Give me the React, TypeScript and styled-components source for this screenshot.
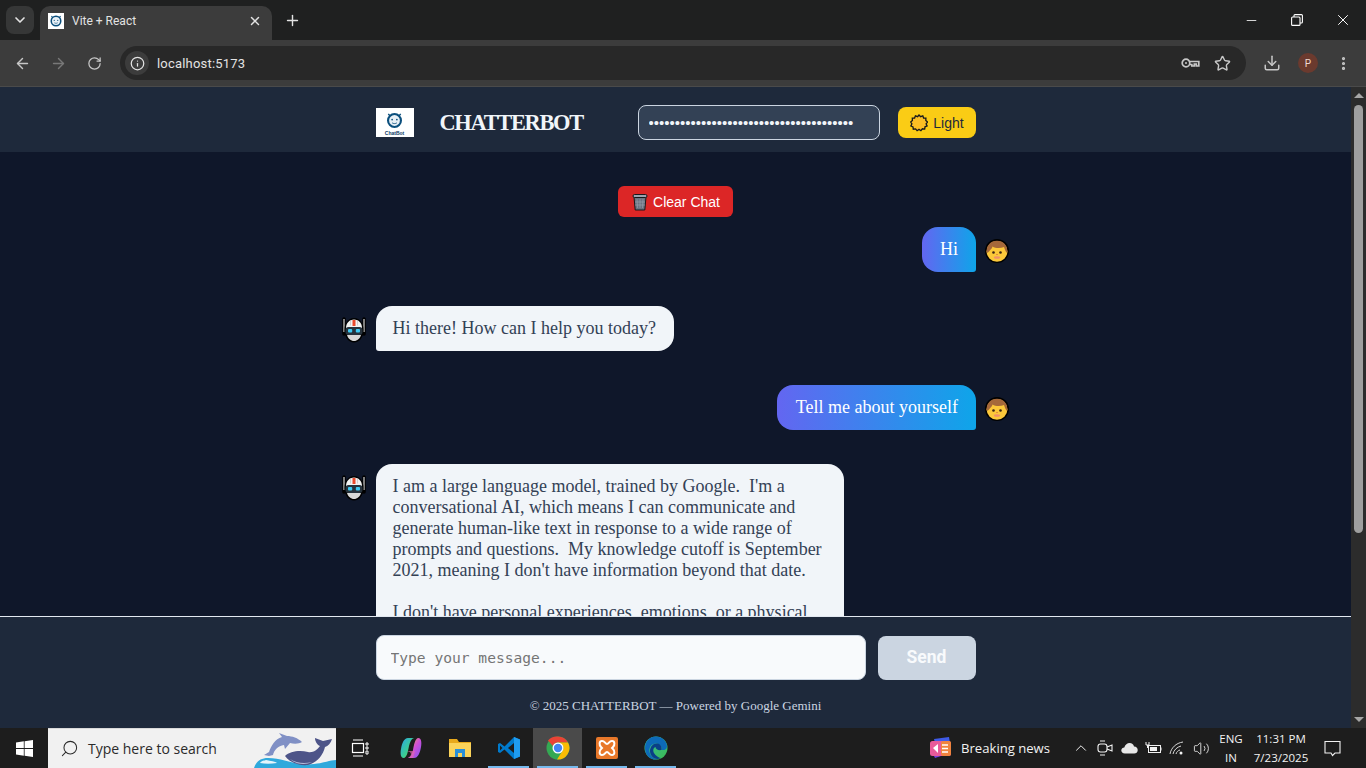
import styled, { createGlobalStyle } from 'styled-components';
import {
    ArrowLeft,
    ArrowRight,
    ChevronDown,
    ChevronUp,
    Download,
    EllipsisVertical,
    Info,
    Minus,
    Plus,
    RotateCw,
    Search,
    Star,
    Volume2,
    X,
} from 'lucide-react';

const GlobalStyle = createGlobalStyle`
    html, body {
        margin: 0;
        padding: 0;
        height: 100%;
        overflow: hidden;
        background: #0f172a;
    }
    * {
        box-sizing: border-box;
    }
`;

const Screen = styled.div`
    width: 1366px;
    height: 768px;
    display: flex;
    flex-direction: column;
    overflow: hidden;
    font-family: 'Liberation Serif', serif;
`;

/* browser frame */
const TabStrip = styled.div`
    height: 40px;
    flex: none;
    display: flex;
    align-items: flex-end;
    padding-left: 6px;
    background: #1f2020;
    color: #e3e3e3;
`;

const TabSearch = styled.div`
    width: 28px;
    height: 28px;
    margin-bottom: 6px;
    border-radius: 8px;
    background: #363737;
    display: flex;
    align-items: center;
    justify-content: center;
`;

const Tab = styled.div`
    width: 232px;
    height: 34px;
    margin-left: 6px;
    padding: 0 10px 5px 8px;
    border-radius: 10px 10px 0 0;
    background: #3c3c3c;
    display: flex;
    align-items: center;
    font: 12px 'Roboto', sans-serif;
`;

const Favicon = styled.div`
    width: 16px;
    height: 16px;
    background: #fff;
    display: flex;
    align-items: center;
    justify-content: center;
`;

const TabTitle = styled.span`
    margin-left: 8px;
    flex: 1;
`;

const NewTab = styled.div`
    width: 28px;
    height: 28px;
    margin: 0 0 6px 6px;
    display: flex;
    align-items: center;
    justify-content: center;
`;

const WindowControls = styled.div`
    margin-left: auto;
    height: 40px;
    display: flex;
`;

const WindowButton = styled.div`
    width: 46px;
    height: 40px;
    display: flex;
    align-items: center;
    justify-content: center;
    color: #fff;
`;

const Toolbar = styled.div`
    height: 47px;
    flex: none;
    display: flex;
    align-items: center;
    padding: 0 4px 0 4px;
    background: #3c3c3c;
    border-bottom: 1px solid #4a4a4a;
    color: #c7c7c7;
`;

const NavButton = styled.div<{ $dim?: boolean }>`
    width: 36px;
    height: 36px;
    display: flex;
    align-items: center;
    justify-content: center;
    color: ${(p) => (p.$dim ? '#787878' : '#c7c7c7')};
`;

const AddressBar = styled.div`
    width: 1126px;
    height: 34px;
    margin-left: 8px;
    padding: 0 15px 0 5px;
    border-radius: 17px;
    background: #282828;
    display: flex;
    align-items: center;
    gap: 8px;
`;

const SiteInfo = styled.div`
    width: 24px;
    height: 24px;
    border-radius: 50%;
    background: #3c3c3c;
    color: #e3e3e3;
    display: flex;
    align-items: center;
    justify-content: center;
`;

const Url = styled.span`
    flex: 1;
    color: #e3e3e3;
    font: 13px 'Roboto', sans-serif;
    letter-spacing: 0.2px;
`;

const AddressIcons = styled.div`
    display: flex;
    align-items: center;
    gap: 14px;
`;

const ToolbarEnd = styled.div`
    margin-left: 8px;
    display: flex;
    align-items: center;
`;

const Profile = styled.div`
    width: 20px;
    height: 20px;
    margin: 0 7px 0 8px;
    border-radius: 50%;
    background: #6b3a2e;
    color: #f0d8d0;
    display: flex;
    align-items: center;
    justify-content: center;
    font: 10px 'Roboto', sans-serif;
`;

/* page in the viewport */
const Viewport = styled.div`
    height: 641px;
    flex: none;
    display: flex;
`;

const Page = styled.div`
    flex: 1;
    min-width: 0;
    display: flex;
    flex-direction: column;
    background: #0f172a;
`;

const Header = styled.header`
    height: 65px;
    flex: none;
    padding-top: 6px;
    background: #1e293b;
    display: flex;
    justify-content: center;
`;

const HeaderInner = styled.div`
    width: 600px;
    display: flex;
    align-items: center;
`;

const Logo = styled.div`
    width: 38px;
    height: 29px;
    padding-top: 3px;
    background: #fff;
    display: flex;
    flex-direction: column;
    align-items: center;
    color: #0b3a66;
    font: bold 5px/6px 'Liberation Sans', sans-serif;
`;

const Title = styled.h1`
    width: 198px;
    margin: 0 0 0 26px;
    color: #f1f5f9;
    font: bold 22.4px 'Liberation Serif', serif;
    letter-spacing: -1.3px;
`;

const KeyInput = styled.input`
    width: 242px;
    height: 35px;
    padding: 0 10px;
    border: 1px solid #cbd5e1;
    border-radius: 8px;
    outline: none;
    background: #334155;
    color: #f1f5f9;
    font: 15px 'Liberation Sans', sans-serif;
`;

const ThemeButton = styled.button`
    width: 78px;
    height: 31px;
    margin-left: 18px;
    padding: 0 0 0 1px;
    border: none;
    border-radius: 8px;
    background: #facc15;
    color: #1e293b;
    display: flex;
    align-items: center;
    justify-content: center;
    gap: 5px;
    font: 14px 'Liberation Sans', sans-serif;
`;

const Conversation = styled.main`
    flex: 1;
    min-height: 0;
    overflow: hidden;
    display: flex;
    justify-content: center;
`;

const ChatColumn = styled.div`
    width: 600px;
    padding-top: 34px;
    display: flex;
    flex-direction: column;
`;

const ClearButton = styled.button`
    width: 115px;
    height: 31px;
    flex: none;
    margin: 0 auto 10px;
    padding: 0 0 0 1px;
    border: none;
    border-radius: 6px;
    background: #dc2626;
    color: #fff;
    display: flex;
    align-items: center;
    justify-content: center;
    gap: 5px;
    font: 14px 'Liberation Sans', sans-serif;
`;

const Row = styled.div<{ $mine?: boolean }>`
    position: relative;
    flex: none;
    display: flex;
    justify-content: ${(p) => (p.$mine ? 'flex-end' : 'flex-start')};
    margin-bottom: 34px;
`;

const Bubble = styled.div<{ $mine?: boolean }>`
    max-width: 468px;
    padding: ${(p) => (p.$mine ? '12px 17.5px 12px 18.5px' : '12px 18px 12px 17px')};
    border-radius: ${(p) => (p.$mine ? '16px 16px 3px 16px' : '16px 16px 16px 3px')};
    background: ${(p) => (p.$mine ? 'linear-gradient(90deg, #6366f1, #0ea5e9)' : '#f1f5f9')};
    color: ${(p) => (p.$mine ? '#fff' : '#334155')};
    font-size: 18px;
    line-height: 21px;
    white-space: pre-wrap;
`;

const Avatar = styled.div<{ $mine?: boolean }>`
    position: absolute;
    top: ${(p) => (p.$mine ? '12px' : '10px')};
    ${(p) => (p.$mine ? 'right: -33px;' : 'left: -34px;')}
    width: 24px;
`;

const Composer = styled.footer`
    height: 112px;
    flex: none;
    border-top: 1px solid #e2e8f0;
    background: #1e293b;
    padding-top: 18px;
    display: flex;
    flex-direction: column;
    align-items: center;
`;

const ComposerRow = styled.div`
    width: 600px;
    display: flex;
    align-items: flex-end;
    gap: 12px;
`;

const MessageInput = styled.input`
    flex: 1;
    height: 45px;
    padding: 0 14px;
    border: 1px solid #cbd5e1;
    border-radius: 8px;
    outline: none;
    background: #f8fafc;
    font: 14.6px 'DejaVu Sans Mono', monospace;
    &::placeholder {
        color: #757575;
    }
`;

const SendButton = styled.button`
    width: 98px;
    height: 44px;
    padding: 0 0 2px;
    border: none;
    border-radius: 8px;
    background: #cbd5e1;
    color: #f8fafc;
    font: bold 17.5px 'Roboto', sans-serif;
`;

const Credit = styled.div`
    margin-top: 18px;
    color: #cbd5e1;
    font-size: 13px;
    line-height: 16px;
`;

const Scrollbar = styled.div`
    width: 15px;
    flex: none;
    background: #2c2c2c;
    display: flex;
    flex-direction: column;
    align-items: center;
`;

const ScrollArrow = styled.div<{ $down?: boolean }>`
    width: 0;
    height: 0;
    margin: ${(p) => (p.$down ? 'auto 0 6px' : '6px 0 7px')};
    border-left: 5px solid transparent;
    border-right: 5px solid transparent;
    ${(p) => (p.$down ? 'border-top: 5px solid #a6a6a6;' : 'border-bottom: 5px solid #a6a6a6;')}
`;

const ScrollThumb = styled.div`
    width: 9px;
    height: 428px;
    border-radius: 5px;
    background: #9f9f9f;
`;

/* windows taskbar */
const Taskbar = styled.div`
    height: 40px;
    flex: none;
    display: flex;
    align-items: stretch;
    background: #1d1d1d;
    color: #f2f2f2;
`;

const StartButton = styled.div`
    width: 48px;
    display: flex;
    align-items: center;
    justify-content: center;
`;

const SearchBox = styled.div`
    position: relative;
    width: 288px;
    padding-left: 12px;
    border-top: 1px solid #d9d9d9;
    background: #f1f1f1;
    color: #2b2b2b;
    display: flex;
    align-items: center;
    gap: 9px;
    overflow: hidden;
    font: 14px 'Open Sans', sans-serif;
`;

const SearchArt = styled.svg`
    position: absolute;
    right: 0;
    bottom: 0;
`;

const TaskItem = styled.div<{ $active?: boolean; $open?: boolean }>`
    position: relative;
    width: 49px;
    display: flex;
    align-items: center;
    justify-content: center;
    background: ${(p) => (p.$active ? '#4a4a4a' : 'transparent')};
    &::after {
        content: '';
        display: ${(p) => (p.$open ? 'block' : 'none')};
        position: absolute;
        left: 4px;
        right: 4px;
        bottom: 0;
        height: 2px;
        background: #76b9ed;
    }
`;

const TaskViewItem = styled(TaskItem)`
    width: 50px;
    padding-right: 3px;
`;

const NewsItem = styled.div`
    margin-left: auto;
    display: flex;
    align-items: center;
    gap: 8px;
    font: 13.1px 'Open Sans', sans-serif;
`;

const Tray = styled.div`
    margin-left: 19px;
    display: flex;
    align-items: center;
`;

const TrayIcon = styled.div`
    width: 24px;
    display: flex;
    align-items: center;
    justify-content: center;
`;

const TrayText = styled.div<{ $wide?: boolean }>`
    width: ${(p) => (p.$wide ? '64px' : '36px')};
    text-align: center;
    font: 11.5px/19px 'Open Sans', sans-serif;
`;

const Notify = styled.div`
    width: 53px;
    padding-right: 15px;
    display: flex;
    align-items: center;
    justify-content: center;
`;

/* drawn pictures */
const BotFace = ({ size }: { size: number }) => (
    <svg width={size} height={size} viewBox="0 0 20 20">
        <circle cx="10" cy="10" r="6.800" fill="#e8f0f6" stroke="#0b4f7d" strokeWidth="2.200" />
        <path d="M3.500 3l2 2.500M16.500 3l-2 2.500" stroke="#0b4f7d" strokeWidth="1.500" />
        <circle cx="7.500" cy="9" r="0.900" fill="#0b4f7d" />
        <circle cx="12.500" cy="9" r="0.900" fill="#0b4f7d" />
        <path d="M7.500 12.500c1.500 1 3.500 1 5 0" fill="none" stroke="#0b4f7d" strokeWidth="0.900" />
    </svg>
);

const KeyIcon = () => (
    <svg width="19" height="12" viewBox="0 0 19 12" fill="none" stroke="#c7c7c7" strokeWidth="1.700">
        <circle cx="5" cy="6" r="3.800" />
        <circle cx="5" cy="6" r="1" fill="#c7c7c7" stroke="none" />
        <path d="M8.800 4.500h9v4.500h-2.500V7h-2v2h-2.500V7.500H8.800" />
    </svg>
);

const RestoreIcon = () => (
    <svg width="12" height="12" viewBox="0 0 12 12" fill="none" stroke="#fff" strokeWidth="1.100">
        <rect x="0.600" y="3" width="8.400" height="8.400" rx="1" />
        <path d="M3 3V1.600a1 1 0 0 1 1-1h6.400a1 1 0 0 1 1 1V8a1 1 0 0 1-1 1H9" />
    </svg>
);

const SunIcon = () => (
    <svg width="18" height="18" viewBox="0 0 18 18">
        <path
            d="M9 1l1.600 1.700 2.200-.9.800 2.200 2.300.1-.1 2.300 1.700 1.600-1.400 1.800 1 2.100-2.100.9-.3 2.300-2.300-.3L10.900 16.700 9 15.400l-1.900 1.300-1.500-1.800-2.300.3-.3-2.300-2.100-.9 1-2.100L.7 8l1.700-1.600-.1-2.300 2.300-.1.800-2.200 2.200.9z"
            fill="#fbbf24"
            stroke="#17191c"
            strokeWidth="1.300"
        />
    </svg>
);

const TrashIcon = () => (
    <svg width="16" height="18" viewBox="0 0 16 18">
        <path d="M2 4h12l-1.200 13H3.200z" fill="#6b7280" stroke="#17191c" strokeWidth="1" />
        <path d="M5 6l.5 9M8 6v9M11 6l-.5 9M3 9h10M3 12h10" stroke="#9ca3af" strokeWidth="0.600" />
        <rect x="1" y="1.500" width="14" height="3" rx="1.500" fill="#9ca3af" stroke="#17191c" strokeWidth="1" />
    </svg>
);

const BoyEmoji = () => (
    <svg width="24" height="24" viewBox="0 0 24 24" display="block">
        <circle cx="12" cy="12" r="12" fill="#000" />
        <circle cx="12" cy="12.300" r="10.400" fill="#fcc83a" />
        <path d="M1.700 14C.8 6 6 1.700 12 1.700S23.200 6 22.300 14c-1-.5-1.800-1.800-2.300-3.200-.3-.9-.6-1.900-1-2.800-3.500 1.500-8.500 1.400-11.500-.5-.4 1.800-1.600 2.700-2.500 3.800-.8 1-1.300 2.300-3.300 2.700z" fill="#a5683a" />
        <circle cx="8.500" cy="13.500" r="1.300" fill="#3b2314" />
        <circle cx="15.500" cy="13.500" r="1.300" fill="#3b2314" />
        <path d="M11 15.500h2" stroke="#e58a3c" strokeWidth="1" />
        <ellipse cx="12" cy="18.500" rx="3.200" ry="1.300" fill="#f0906a" />
    </svg>
);

const RobotEmoji = () => (
    <svg width="24" height="28" viewBox="0 0 24 28" display="block">
        <path d="M2 3v15M22 3v15" stroke="#000" strokeWidth="3.600" strokeLinecap="round" />
        <path d="M2 3v13M22 3v13" stroke="#a8a8a8" strokeWidth="1.500" />
        <path d="M12 2C6 2 2.500 7 2.500 14c0 7 4 12.500 9.500 12.500S21.500 21 21.500 14C21.500 7 18 2 12 2z" fill="#000" />
        <path d="M4 12C4 7 7.500 3.500 12 3.500S20 7 20 12z" fill="#f2f2f2" />
        <path d="M5 19h14c-1 3.500-3.800 6-7 6s-6-2.500-7-6z" fill="#d8d8d8" />
        <rect x="10.500" y="4" width="3" height="6" fill="#ea4a2c" />
        <path d="M8.500 4.500v5M15.500 4.500v5" stroke="#c4c4c4" strokeWidth="0.800" />
        <rect x="3.500" y="11" width="17" height="8" rx="3" fill="#26323c" />
        <rect x="6" y="13" width="4.200" height="3.500" rx="1" fill="#3cc8f2" />
        <rect x="13.800" y="13" width="4.200" height="3.500" rx="1" fill="#3cc8f2" />
    </svg>
);

const WindowsLogo = () => (
    <svg width="17" height="17" viewBox="0 0 17 17" fill="#fff">
        <path d="M0 2.400 7.800 1.300v6.800H0zM8.600 1.200 17 0v8.100H8.600zM0 8.900h7.800v6.800L0 14.600zM8.600 8.900H17V17l-8.400-1.200z" />
    </svg>
);

const TaskView = () => (
    <svg width="18" height="18" viewBox="0 0 18 18" fill="none" stroke="#fff" strokeWidth="1.200">
        <path d="M2 1h10M2 17h10" />
        <rect x="1.500" y="4.500" width="11" height="9" />
        <path d="M15 4h2v2h-2zM15 8h2v2h-2zM15 12h2v3h-2z" strokeWidth="1" />
    </svg>
);

const CopilotIcon = () => (
    <svg width="22" height="22" viewBox="0 0 22 22">
        <defs>
            <linearGradient id="cpa" x1="0" y1="0" x2="1" y2="1">
                <stop offset="0" stopColor="#2aa6e8" />
                <stop offset="0.600" stopColor="#3ccf8e" />
                <stop offset="1" stopColor="#f6c23a" />
            </linearGradient>
            <linearGradient id="cpb" x1="0" y1="0" x2="1" y2="1">
                <stop offset="0" stopColor="#f2b33c" />
                <stop offset="0.500" stopColor="#d04fd8" />
                <stop offset="1" stopColor="#7a5af0" />
            </linearGradient>
        </defs>
        <path d="M8 1h6c-3 1-4 4-5 8-1 5-2 12-5.500 12C1 21 0 17 1 12 2 6 4 1 8 1z" fill="url(#cpa)" />
        <path d="M14 21H8c3-1 4-4 5-8 1-5 2-12 5.500-12C21 1 22 5 21 10c-1 6-3 11-7 11z" fill="url(#cpb)" />
        <path d="M7 14h8l-2 7H8c2-1 3-3 3-4l-1-2z" fill="#e06ab0" opacity="0.700" />
    </svg>
);

const FolderIcon = () => (
    <svg width="22" height="20" viewBox="0 0 22 20">
        <path d="M0 1h8l2 3h12v15H0z" fill="#e8a91c" />
        <path d="M0 5h22v14H0z" fill="#fbd35a" />
        <path d="M6 11h10v8h-3v-4H9v4H6z" fill="#2a8fd8" />
    </svg>
);

const VsCodeIcon = () => (
    <svg width="24" height="24" viewBox="0 0 24 24">
        <path d="M17 1 7.500 10.500 3 7 1 8v8l2 1 4.500-3.500L17 23l6-2.500v-17z" fill="#007acc" />
        <path d="M17 1l6 2.500v17L17 23z" fill="#1f9cf0" />
        <path d="M17 7v10l-6-5z" fill="#1d1d1d" />
        <path d="M3 9.500v5L5.500 12z" fill="#1d1d1d" />
    </svg>
);

const ChromeIcon = () => (
    <svg width="24" height="24" viewBox="0 0 24 24">
        <circle cx="12" cy="12" r="11.500" fill="#34a853" />
        <path d="M12 .5A11.500 11.500 0 0 1 22 6.500H12A5.500 5.500 0 0 0 6.800 10L2 4.500A11.500 11.500 0 0 1 12 .5z" fill="#ea4335" />
        <path d="M22 6.500A11.500 11.500 0 0 1 11 23.500L17 14a5.500 5.500 0 0 0-5-7.500z" fill="#fbbc04" />
        <circle cx="12" cy="12" r="5.500" fill="#fff" />
        <circle cx="12" cy="12" r="4.200" fill="#4285f4" />
    </svg>
);

const XamppIcon = () => (
    <svg width="24" height="24" viewBox="0 0 24 24">
        <rect x="1" y="1" width="22" height="22" rx="2" fill="#e8782a" />
        <path d="M7 5c3 0 3 3 5 3s2-3 5-3 3 4 1 6l-1 1 1 1c2 2 2 6-1 6s-3-3-5-3-2 3-5 3-3-4-1-6l1-1-1-1C4 9 4 5 7 5z" fill="none" stroke="#fff" strokeWidth="2" />
    </svg>
);

const EdgeIcon = () => (
    <svg width="24" height="24" viewBox="0 0 24 24">
        <defs>
            <linearGradient id="edg" x1="0" y1="0" x2="1" y2="1">
                <stop offset="0" stopColor="#35c1a0" />
                <stop offset="1" stopColor="#3db94f" />
            </linearGradient>
        </defs>
        <circle cx="12" cy="12" r="11.500" fill="url(#edg)" />
        <path d="M1 12C1 5 6 .5 12 .5c5 0 11 4 11 10 0 3-3 4-5.500 3.500 1-3-2-6.500-5.500-6.500-5 0-8 5-6 10 1 3 4 5.500 8 6C6 24.500 1 19 1 12z" fill="#0d6ab8" />
        <path d="M6 15c0-4 3-7.500 6.500-7.500S18 10 17.500 14c-3 .5-6-.5-6-3-3 1-3 5 0 8 1.500 1.500 3.500 3 5.500 3-6 3-11-2-11-7z" fill="#0a3f88" />
    </svg>
);

const NewsIcon = () => (
    <svg width="24" height="24" viewBox="0 0 24 24">
        <path d="M5 3l15-2 1 6H6z" fill="#3f5be8" />
        <path d="M4 18h14l-12 4z" fill="#7a3fe0" />
        <rect x="1" y="5" width="21" height="15" rx="2.500" fill="#e85a9a" />
        <rect x="12" y="5" width="10" height="15" rx="2" fill="#f0843e" />
        <path d="M4 12l5-4v9z" fill="#fff" />
        <path d="M13 9h6M13 12.500h6M13 16h6" stroke="#fff" strokeWidth="1.500" />
    </svg>
);

const MeetIcon = () => (
    <svg width="16" height="18" viewBox="0 0 16 18" fill="none" stroke="#f2f2f2" strokeWidth="1.100">
        <rect x="1" y="5" width="9" height="8" rx="2.500" />
        <path d="M10 8l5-2v6l-5-2M3 2h5M3 16h5" />
    </svg>
);

const CloudIcon = () => (
    <svg width="17" height="12" viewBox="0 0 17 12" fill="#e8e8e8">
        <path d="M4 11.500C1.500 11.500.3 10 .3 8.500c0-2 1.500-3 3-3C4.200 2.500 6.300 1 8.500 1c2.500 0 4 1.500 4.500 3.500 2.500 0 4 1.700 3.700 4-.2 1.800-1.500 3-3.500 3z" />
    </svg>
);

const BatteryIcon = () => (
    <svg width="17" height="14" viewBox="0 0 17 14" fill="none" stroke="#f2f2f2" strokeWidth="1">
        <rect x="3.500" y="4.500" width="12" height="7" />
        <rect x="5" y="6" width="7" height="4" fill="#f2f2f2" stroke="none" />
        <path d="M1 1v3h3V1M2.500 4v3" />
        <path d="M16 6.500v3" />
    </svg>
);

const WifiIcon = () => (
    <svg width="16" height="14" viewBox="0 0 16 14" fill="none" stroke="#d8d8d8" strokeWidth="1">
        <path d="M1 13C2 7 7 2 14 1M4 13c.8-4 4-7 8-8M7 13c.5-2 2-3.500 4-4" />
        <circle cx="12" cy="12" r="1.500" fill="#f2f2f2" stroke="none" />
    </svg>
);

const NotifyIcon = () => (
    <svg width="17" height="17" viewBox="0 0 17 17" fill="none" stroke="#f2f2f2" strokeWidth="1.100">
        <path d="M1 1.500h15v11.500h-5l-2.500 2.500L7 13H1z" />
    </svg>
);

const DolphinArt = () => (
    <SearchArt width="82" height="40" viewBox="0 0 82 40">
        <path d="M0 40C2 34 6 30 14 30c16 0 26 8 46 6 10-1 16-4 22-4v8z" fill="#2fa9dc" />
        <path d="M6 35c2-3 4-2 6-3 2 0 3 1 5 1 2 0 5 1 6 2-6 1-12 1-17 0z" fill="#e4f5fb" />
        <path d="M48 14C44 10 38 8 33 8L25 5l3 4C21 11 17 18 15 24l-5 3 5 1 4-1c1-5 5-9 11-10l1 4 5-6c4 1 9 1 12-1z" fill="#8090c5" />
        <path d="M31 28c5-5 15-6 23-4 5 1 9-2 12-6-3-1-5-5-5-8l8 3 9-2c-1 4-4 7-7 8-2 9-9 16-17 18-10 1-19-3-23-9z" fill="#4d5488" />
        <path d="M36 31c6 4 14 5 22 3-6 3-16 3-22-3z" fill="#b9bfdc" />
    </SearchArt>
);

const App = () => (
    <Screen>
        <GlobalStyle />
        <TabStrip>
            <TabSearch>
                <ChevronDown size={16} strokeWidth={2.500} />
            </TabSearch>
            <Tab>
                <Favicon>
                    <BotFace size={14} />
                </Favicon>
                <TabTitle>Vite + React</TabTitle>
                <X size={14} strokeWidth={2.500} />
            </Tab>
            <NewTab>
                <Plus size={17} strokeWidth={2} />
            </NewTab>
            <WindowControls>
                <WindowButton>
                    <Minus size={15} strokeWidth={1.300} />
                </WindowButton>
                <WindowButton>
                    <RestoreIcon />
                </WindowButton>
                <WindowButton>
                    <X size={18} strokeWidth={1.300} />
                </WindowButton>
            </WindowControls>
        </TabStrip>
        <Toolbar>
            <NavButton>
                <ArrowLeft size={17} strokeWidth={2} />
            </NavButton>
            <NavButton $dim>
                <ArrowRight size={17} strokeWidth={2} />
            </NavButton>
            <NavButton>
                <RotateCw size={15} strokeWidth={2} />
            </NavButton>
            <AddressBar>
                <SiteInfo>
                    <Info size={15} strokeWidth={2} />
                </SiteInfo>
                <Url>localhost:5173</Url>
                <AddressIcons>
                    <KeyIcon />
                    <Star size={17} strokeWidth={2} />
                </AddressIcons>
            </AddressBar>
            <ToolbarEnd>
                <NavButton>
                    <Download size={18} strokeWidth={2} />
                </NavButton>
                <Profile>P</Profile>
                <NavButton>
                    <EllipsisVertical size={17} strokeWidth={2.500} />
                </NavButton>
            </ToolbarEnd>
        </Toolbar>
        <Viewport>
            <Page>
                <Header>
                    <HeaderInner>
                        <Logo>
                            <BotFace size={19} />
                            ChatBot
                        </Logo>
                        <Title>CHATTERBOT</Title>
                        <KeyInput type="password" defaultValue="AIzaSyD4xQ7mN2pL9vK3tR8wB5cF1hJ6gE0sUoY" readOnly />
                        <ThemeButton>
                            <SunIcon />
                            Light
                        </ThemeButton>
                    </HeaderInner>
                </Header>
                <Conversation>
                    <ChatColumn>
                        <ClearButton>
                            <TrashIcon />
                            Clear Chat
                        </ClearButton>
                        <Row $mine>
                            <Bubble $mine>Hi</Bubble>
                            <Avatar $mine>
                                <BoyEmoji />
                            </Avatar>
                        </Row>
                        <Row>
                            <Avatar>
                                <RobotEmoji />
                            </Avatar>
                            <Bubble>Hi there! How can I help you today?</Bubble>
                        </Row>
                        <Row $mine>
                            <Bubble $mine>Tell me about yourself</Bubble>
                            <Avatar $mine>
                                <BoyEmoji />
                            </Avatar>
                        </Row>
                        <Row>
                            <Avatar>
                                <RobotEmoji />
                            </Avatar>
                            <Bubble>
                                {"I am a large language model, trained by Google.  I'm a conversational AI, which means I can communicate and generate human-like text in response to a wide range of prompts and questions.  My knowledge cutoff is September 2021, meaning I don't have information beyond that date.\n\nI don't have personal experiences, emotions, or a physical body. I exist only as code and data."}
                            </Bubble>
                        </Row>
                    </ChatColumn>
                </Conversation>
                <Composer>
                    <ComposerRow>
                        <MessageInput placeholder="Type your message..." />
                        <SendButton>Send</SendButton>
                    </ComposerRow>
                    <Credit>© 2025 CHATTERBOT — Powered by Google Gemini</Credit>
                </Composer>
            </Page>
            <Scrollbar>
                <ScrollArrow />
                <ScrollThumb />
                <ScrollArrow $down />
            </Scrollbar>
        </Viewport>
        <Taskbar>
            <StartButton>
                <WindowsLogo />
            </StartButton>
            <SearchBox>
                <Search size={19} strokeWidth={1.300} style={{ transform: 'scaleX(-1)' }} />
                Type here to search
                <DolphinArt />
            </SearchBox>
            <TaskViewItem>
                <TaskView />
            </TaskViewItem>
            <TaskItem>
                <CopilotIcon />
            </TaskItem>
            <TaskItem>
                <FolderIcon />
            </TaskItem>
            <TaskItem $open>
                <VsCodeIcon />
            </TaskItem>
            <TaskItem $open $active>
                <ChromeIcon />
            </TaskItem>
            <TaskItem $open>
                <XamppIcon />
            </TaskItem>
            <TaskItem $open>
                <EdgeIcon />
            </TaskItem>
            <NewsItem>
                <NewsIcon />
                Breaking news
            </NewsItem>
            <Tray>
                <TrayIcon>
                    <ChevronUp size={18} strokeWidth={1.300} />
                </TrayIcon>
                <TrayIcon>
                    <MeetIcon />
                </TrayIcon>
                <TrayIcon>
                    <CloudIcon />
                </TrayIcon>
                <TrayIcon>
                    <BatteryIcon />
                </TrayIcon>
                <TrayIcon>
                    <WifiIcon />
                </TrayIcon>
                <TrayIcon>
                    <Volume2 size={17} strokeWidth={1.200} />
                </TrayIcon>
                <TrayText>
                    ENG
                    <br />
                    IN
                </TrayText>
                <TrayText $wide>
                    11:31 PM
                    <br />
                    7/23/2025
                </TrayText>
                <Notify>
                    <NotifyIcon />
                </Notify>
            </Tray>
        </Taskbar>
    </Screen>
);

export default App;
